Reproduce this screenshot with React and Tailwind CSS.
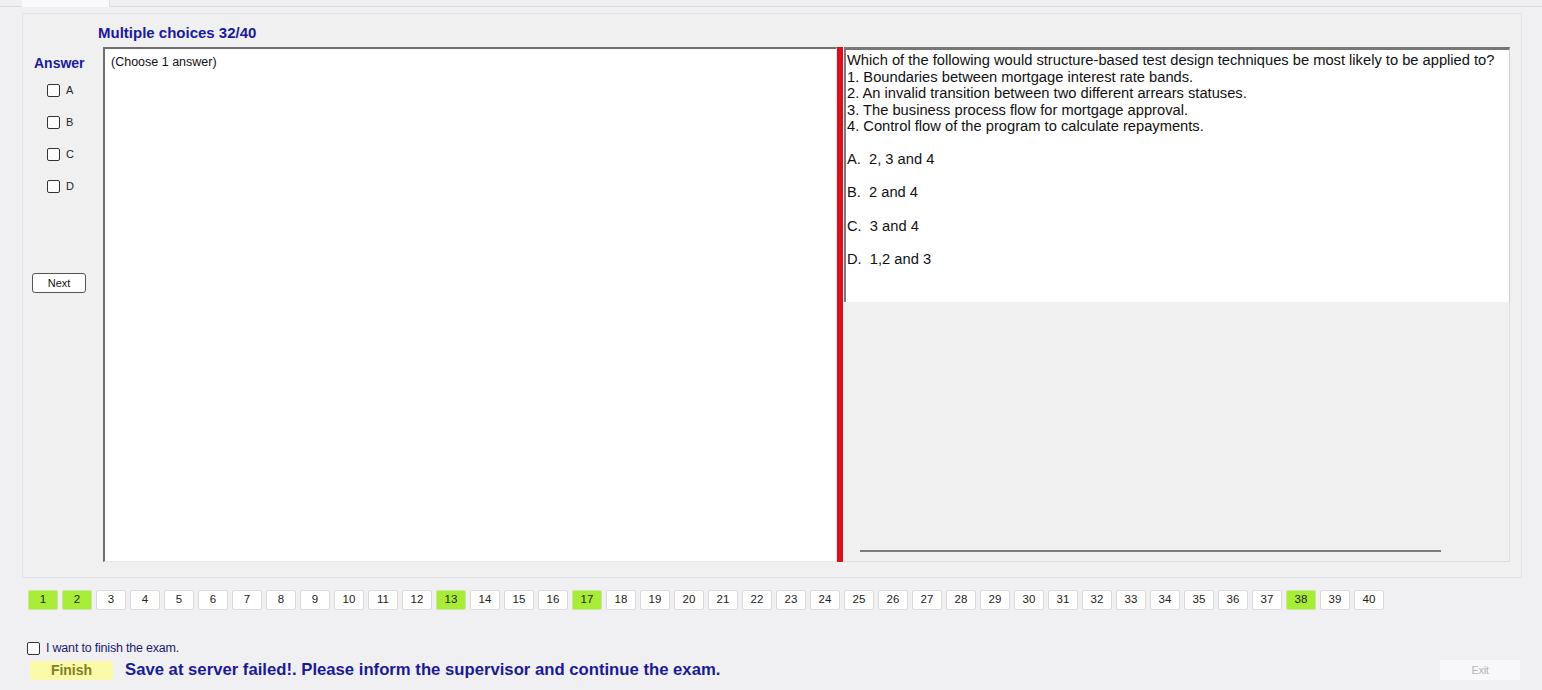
import React from "react";

const green = new Set([1, 2, 13, 17, 38]);

function Box() {
  return <span className="inline-block w-[13px] h-[13px] border border-[#333] rounded-[2px] bg-white" />;
}

export default function App() {
  const nums = Array.from({ length: 40 }, (_, i) => i + 1);
  return (
    <div className="w-[1542px] h-[690px] bg-[#f0f0f2] overflow-hidden relative" style={{ fontFamily: '"Liberation Sans", Arial, sans-serif' }}>
      {/* tab strip */}
      <div className="h-[7px] border-b border-[#dadada] flex">
        <div className="ml-[22px] w-[88px] h-[7px] bg-[#fafafa] border-r border-[#dcdcdc]" />
      </div>
      {/* main panel */}
      <div className="ml-[22px] mt-[6px] w-[1500px] h-[565px] border border-[#e2e2e6] bg-[#f0f0f0] relative">
        <div className="pl-[75px] pt-[10px] h-[33px] text-[15px] font-bold text-[#1a1a9e] leading-[17px]">Multiple choices 32/40</div>
        <div className="flex">
          {/* answer column */}
          <div className="w-[80px] flex flex-col">
            <div className="pl-[11px] pt-[8px] text-[14px] font-bold text-[#1a1a9e] leading-[16px]">Answer</div>
            <div className="flex flex-col gap-[19px] pl-[24px] pt-[13px]">
              {["A", "B", "C", "D"].map((l) => (
                <div key={l} className="flex items-center gap-[6px] text-[11px] text-[#222] h-[13px]">
                  <Box />
                  <span>{l}</span>
                </div>
              ))}
            </div>
            <button className="ml-[9px] mt-[80px] w-[54px] h-[20px] bg-white border border-[#555] rounded-[3px] text-[11px] text-[#111] leading-[18px]">Next</button>
          </div>
          {/* left text box */}
          <div className="w-[734px] h-[515px] bg-white border-l-2 border-t-2 border-[#6e6e6e] border-r border-b border-r-[#e8e8e8] border-b-[#e8e8e8] pl-[6px] pt-[6px] text-[12.5px] text-[#111] leading-[14px]">
            (Choose 1 answer)
          </div>
          {/* splitter */}
          <div className="w-[6px] h-[515px] bg-[#d7121e]" />
          {/* right panel */}
          <div className="w-[666px] h-[515px] flex flex-col ml-[1px]">
            <div className="h-[255px] bg-white border-t-[3px] border-t-[#777] border-l-2 border-l-[#7a7a7a] border-r border-r-[#d0d0d0] pl-[1px] pt-[2px] text-[14.7px] text-[#111] leading-[16.5px]">
              <div>Which of the following would structure-based test design techniques be most likely to be applied to?</div>
              <div>1. Boundaries between mortgage interest rate bands.</div>
              <div>2. An invalid transition between two different arrears statuses.</div>
              <div>3. The business process flow for mortgage approval.</div>
              <div>4. Control flow of the program to calculate repayments.</div>
              <div className="mt-[16.5px]">A.&nbsp; 2, 3 and 4</div>
              <div className="mt-[16.5px]">B.&nbsp; 2 and 4</div>
              <div className="mt-[17px]">C.&nbsp; 3 and 4</div>
              <div className="mt-[16.5px]">D.&nbsp; 1,2 and 3</div>
            </div>
            <div className="flex-1 border-r border-[#dcdcdc] border-b relative">
              <div className="absolute left-[16px] top-[248px] w-[581px] h-[2px] bg-[#7d7d7d]" />
            </div>
          </div>
        </div>
      </div>
      {/* numbers */}
      <div className="flex gap-[4px] pl-[28px] mt-[12px]">
        {nums.map((n) => (
          <div
            key={n}
            className={
              green.has(n)
                ? "w-[30px] h-[20px] flex items-center justify-center text-[11.5px] text-[#222] bg-[#a8ec38] border border-[#c8e8a0] rounded-[2px]"
                : "w-[30px] h-[20px] flex items-center justify-center text-[11.5px] text-[#222] bg-white border border-[#dadada] rounded-[2px]"
            }
          >
            {n}
          </div>
        ))}
      </div>
      {/* finish checkbox */}
      <div className="flex items-center gap-[6px] pl-[27px] mt-[31px] text-[12.5px] text-[#1a1a6e] tracking-[-0.2px] h-[14px]">
        <Box />
        <span>I want to finish the exam.</span>
      </div>
      <div className="flex items-center pl-[30px] mt-[5px] h-[20px]">
        <div className="w-[83px] h-[19px] bg-[#fafaa8] flex items-center justify-center text-[14px] font-bold text-[#7f7f2a]">Finish</div>
        <div className="ml-[12px] text-[16.7px] font-bold text-[#1a1a96] leading-[20px]">Save at server failed!. Please inform the supervisor and continue the exam.</div>
        <div className="ml-auto mr-[22px] w-[80px] h-[20px] bg-[#f8f8fa] flex items-center justify-center text-[11px] text-[#b4b4b4] tracking-[-0.3px]">Exit</div>
      </div>
    </div>
  );
}
